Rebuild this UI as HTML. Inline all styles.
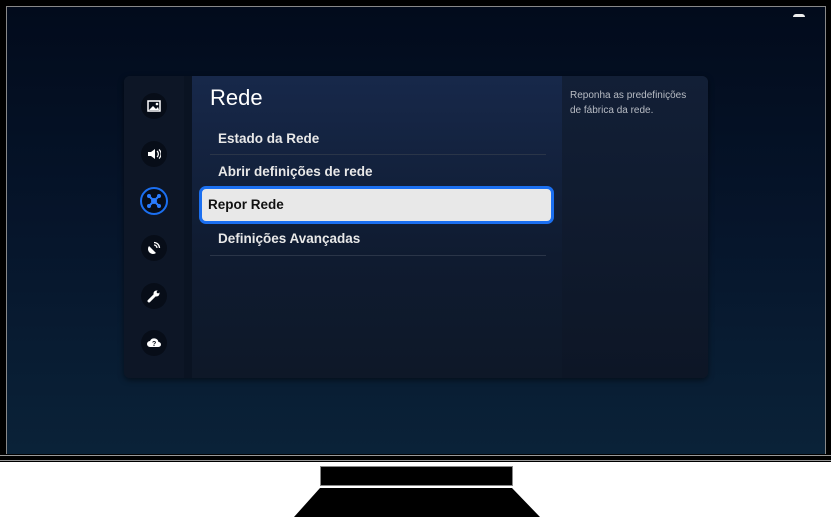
<!DOCTYPE html><html><head><style>
body{margin:0;width:831px;height:517px;background:#fff;position:relative;overflow:hidden;font-family:"Liberation Sans",sans-serif}
.tv{position:absolute;left:0;top:0;width:831px;height:462px;background:#000}
.scr{position:absolute;left:6px;top:6px;width:818px;height:447px;border:1px solid #888;border-bottom:none;background:linear-gradient(180deg,#020b1c 0%,#06152b 50%,#0a2238 100%)}
.ln{position:absolute;left:0;width:831px;height:1px;background:#999}
.panel{position:absolute;left:124px;top:76px;width:584px;height:302px;border-radius:6px;background:#101c30;box-shadow:0 2px 6px rgba(0,0,0,.5);overflow:hidden}
.side{position:absolute;left:0;top:0;width:60px;height:302px;background:#0d1626}
.gap{position:absolute;left:60px;top:0;width:8px;height:302px;background:#0a1322}
.main{position:absolute;left:68px;top:0;width:370px;height:302px;background:linear-gradient(180deg,#17284a,#0f1b30 60%,#0e1828)}
.right{position:absolute;left:438px;top:0;width:146px;height:302px;background:linear-gradient(180deg,#121f36,#0d1626)}
.ic{position:absolute;left:17px;width:26px;height:26px;border-radius:50%;background:#070d18;color:#fff;font-size:13px;text-align:center;line-height:26px}
h1{position:absolute;left:86px;top:9px;margin:0;font-weight:normal;color:#fff;font-size:22px}
.it{position:absolute;left:94px;color:#e8e8e8;font-size:13.5px;font-weight:bold}
.sep{position:absolute;left:86px;width:336px;height:1px;background:#2a3548}
.hl{position:absolute;left:75px;top:110px;width:355px;height:38px;border:3px solid #1b6ff0;border-radius:7px;background:#e8e8e8;color:#111;font-size:13.5px;font-weight:bold;line-height:32px;padding-left:6px;box-sizing:border-box}
.desc{position:absolute;left:446px;top:12px;color:#b8bcc4;font-size:10px;line-height:15px}
</style></head><body>
<div class="tv"><div class="scr">
<div style="position:absolute;right:20px;top:7px;width:12px;height:3px;border-radius:3px 3px 0 0;background:#eee"></div>
</div></div>
<div class="ln" style="top:455px"></div><div class="ln" style="top:460px"></div>
<div style="position:absolute;left:320px;top:466px;width:191px;height:18px;background:#000;border:1px solid #888"></div>
<div style="position:absolute;left:294px;top:488px;width:246px;height:29px;background:#000;clip-path:polygon(26px 0,218px 0,246px 29px,0 29px)"></div>
<div class="panel">
<div class="side"></div><div class="gap"></div><div class="main"></div><div class="right"></div>
<div class="ic" style="top:17px"><svg width="14" height="12" viewBox="0 0 14 12" style="margin-top:7px"><rect x="1" y="1" width="12" height="10" fill="none" stroke="#fff" stroke-width="1.5"/><path d="M2 10 L6 6 L9 9 L11 7 L12 10Z" fill="#fff"/><circle cx="10" cy="4" r="1.3" fill="#fff"/></svg></div>
<div class="ic" style="top:65px"><svg width="14" height="12" viewBox="0 0 14 12" style="margin-top:7px"><path d="M1 4h3l4-3v10l-4-3H1z" fill="#fff"/><path d="M10 3a4 4 0 0 1 0 6M12 1.5a6 6 0 0 1 0 9" stroke="#fff" fill="none" stroke-width="1.2"/></svg></div>
<div class="ic" style="top:111px;width:24px;height:24px;border:2px solid #1b6ff0;left:16px"><svg width="16" height="16" viewBox="0 0 16 16" style="margin-top:4px"><g stroke="#2a7cff" stroke-width="2"><path d="M3 3L13 13M13 3L3 13"/></g><circle cx="8" cy="8" r="3" fill="#2a7cff"/><g fill="#2a7cff"><circle cx="3" cy="3" r="2"/><circle cx="13" cy="3" r="2"/><circle cx="3" cy="13" r="2"/><circle cx="13" cy="13" r="2"/></g></svg></div>
<div class="ic" style="top:159px"><svg width="14" height="14" viewBox="0 0 14 14" style="margin-top:6px"><path d="M2 5a5 5 0 0 0 7 7z" fill="#fff"/><path d="M7 4a3 3 0 0 1 3 3M7 1.5a5.5 5.5 0 0 1 5.5 5.5" stroke="#fff" fill="none" stroke-width="1.3"/></svg></div>
<div class="ic" style="top:207px"><svg width="14" height="14" viewBox="0 0 14 14" style="margin-top:6px"><path d="M2 12L8 6" stroke="#fff" stroke-width="3" stroke-linecap="round"/><circle cx="9.5" cy="4.5" r="3" fill="#fff"/><circle cx="11" cy="3" r="1.3" fill="#070d18"/></svg></div>
<div class="ic" style="top:254px"><svg width="16" height="14" viewBox="0 0 16 14" style="margin-top:6px"><path d="M4 11a3 3 0 0 1 0-6a4.5 4.5 0 0 1 8.5 1a2.5 2.5 0 0 1 0 5z" fill="#fff"/><text x="6" y="10" font-size="7" font-weight="bold" fill="#070d18" font-family="Liberation Sans">?</text></svg></div>
<h1>Rede</h1>
<div class="it" style="top:55px">Estado da Rede</div>
<div class="sep" style="top:78px"></div>
<div class="it" style="top:88px">Abrir definições de rede</div>
<div class="hl">Repor Rede</div>
<div class="it" style="top:155px">Definições Avançadas</div>
<div class="sep" style="top:179px"></div>
<div class="desc">Reponha as predefinições<br>de fábrica da rede.</div>
</div>
</body></html>
